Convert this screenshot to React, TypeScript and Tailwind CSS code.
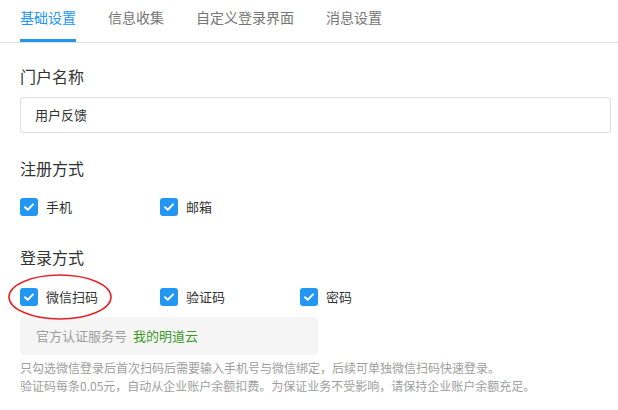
import React from 'react';

const font = { fontFamily: '"Noto Sans CJK SC", "Noto Sans", sans-serif' };

function Check({ label }: { label: string }) {
  return (
    <div className="flex w-[140px] items-center">
      <span className="flex h-[18px] w-[18px] items-center justify-center rounded-[3px] bg-[#2196f3]">
        <svg width="12" height="12" viewBox="0 0 12 12" fill="none">
          <path d="M2 6.2 L4.8 8.8 L10 3.4" stroke="#fff" strokeWidth="2" strokeLinecap="round" strokeLinejoin="round" />
        </svg>
      </span>
      <span className="ml-[8px] text-[13px] leading-[20px] text-[#333]">{label}</span>
    </div>
  );
}

export default function App() {
  const tabs = ['基础设置', '信息收集', '自定义登录界面', '消息设置'];
  return (
    <div className="h-[410px] w-[618px] overflow-hidden bg-white" style={font}>
      <div className="flex gap-8 border-b border-[#e0e0e0] px-5">
        {tabs.map((t, i) => (
          <div
            key={t}
            className={
              i === 0
                ? 'flex h-[42px] items-center border-b-[3px] border-[#2196f3] pb-1 text-[14px] text-[#2196f3]'
                : 'flex h-[42px] items-center border-b-[3px] border-transparent pb-1 text-[14px] text-[#757575]'
            }
          >
            {t}
          </div>
        ))}
      </div>

      <div className="pl-5 pr-[7px]">
        <div className="mt-[21px] text-[16px] leading-[24px] text-[#333]">门户名称</div>
        <div className="mt-[9px] flex h-[36px] items-center rounded-[3px] border border-[#ddd] px-[14px] text-[13px] text-[#333]">
          用户反馈
        </div>

        <div className="mt-[23px] text-[16px] leading-[24px] text-[#333]">注册方式</div>
        <div className="mt-[17px] flex">
          <Check label="手机" />
          <Check label="邮箱" />
        </div>

        <div className="mt-[28px] text-[16px] leading-[24px] text-[#333]">登录方式</div>
        <div className="relative mt-[18px] flex">
          <Check label="微信扫码" />
          <Check label="验证码" />
          <Check label="密码" />
          <svg className="absolute left-[-13px] top-[-14px]" width="106" height="48" viewBox="0 0 106 48" fill="none">
            <ellipse cx="53" cy="24" rx="51" ry="22" stroke="#e0262b" strokeWidth="1.6" />
          </svg>
        </div>

        <div className="mt-[10px] flex h-[38px] w-[298px] items-center rounded-[4px] bg-[#f5f5f5] px-4 text-[13px]">
          <span className="text-[#9e9e9e]">官方认证服务号</span>
          <span className="ml-[6px] text-[#3d9a2a]">我的明道云</span>
        </div>

        <div className="mt-[4px] text-[12px] leading-[18px] text-[#9e9e9e]">
          <div>只勾选微信登录后首次扫码后需要输入手机号与微信绑定，后续可单独微信扫码快速登录。</div>
          <div>验证码每条0.05元，自动从企业账户余额扣费。为保证业务不受影响，请保持企业账户余额充足。</div>
        </div>
      </div>
    </div>
  );
}
